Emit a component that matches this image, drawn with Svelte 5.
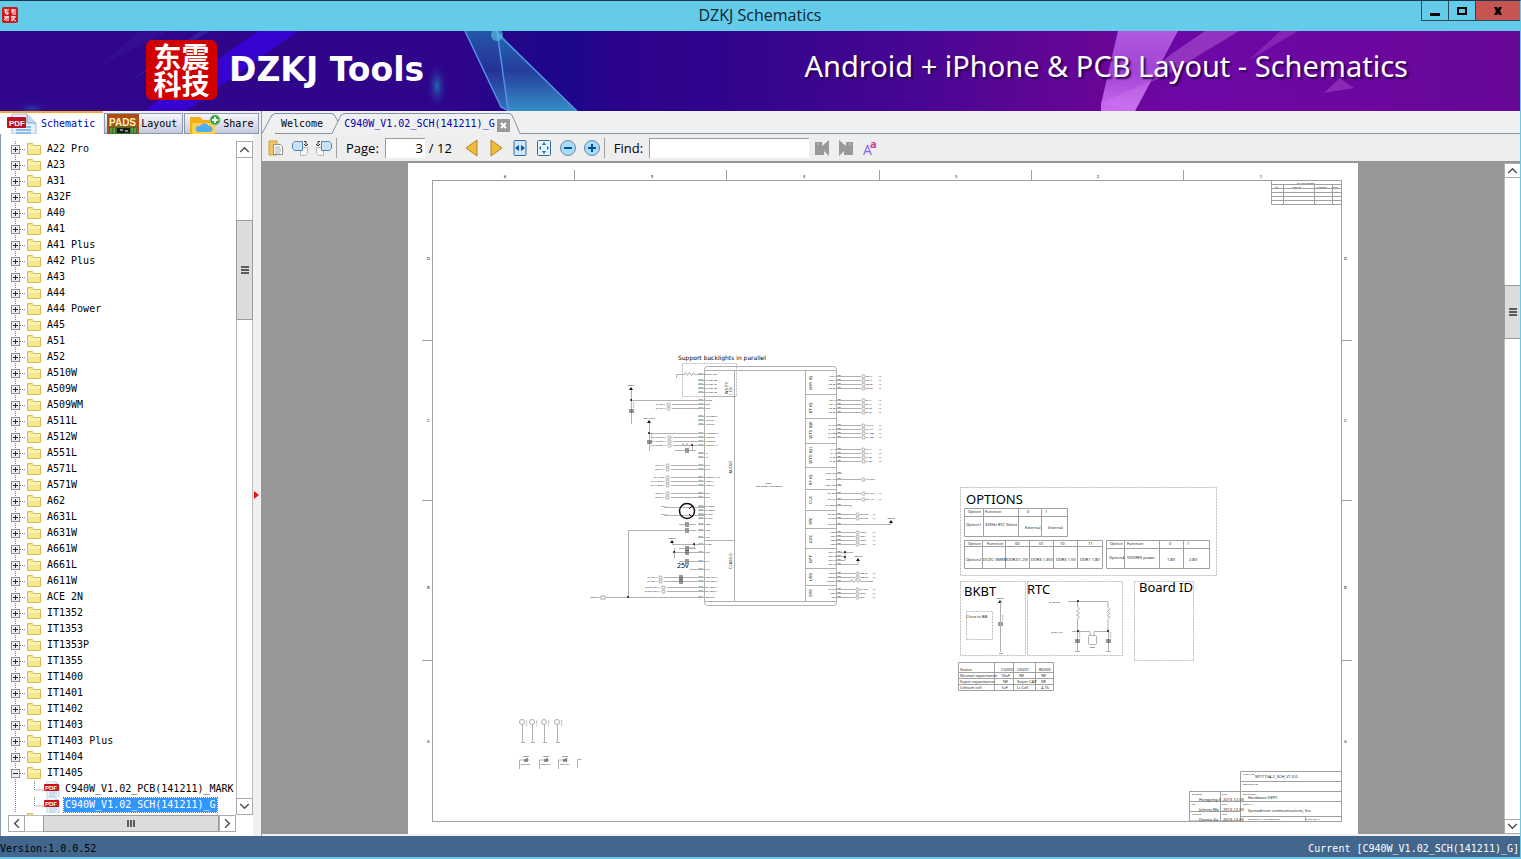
<script lang="ts">
	type PinRow = { y: number; port?: number; name?: string; note?: string; page?: string };

	const folders = [
		'A22 Pro', 'A23', 'A31', 'A32F', 'A40', 'A41', 'A41 Plus', 'A42 Plus', 'A43', 'A44',
		'A44 Power', 'A45', 'A51', 'A52', 'A510W', 'A509W', 'A509WM', 'A511L', 'A512W', 'A551L',
		'A571L', 'A571W', 'A62', 'A631L', 'A631W', 'A661W', 'A661L', 'A611W', 'ACE 2N', 'IT1352',
		'IT1353', 'IT1353P', 'IT1355', 'IT1400', 'IT1401', 'IT1402', 'IT1403', 'IT1403 Plus',
		'IT1404', 'IT1405'
	];
	const files = ['C940W_V1.02_PCB(141211)_MARK', 'C940W_V1.02_SCH(141211)_G'];

	let openFolder = $state('IT1405');
	let selectedFile = $state(files[1]);
	let page = $state('3');
	let query = $state('');

	// Sheet frame
	const columns = [[505, '6'], [652, '5'], [804, '4'], [956, '3'], [1098, '2'], [1261, '1']];
	const rows = [[260, 'D'], [422, 'C'], [589, 'B'], [743, 'A']];
	const topTicks = [574, 726, 879, 1031, 1183];
	const sideTicks = [340, 500, 660];

	// U200, left side
	const leftPins: PinRow[] = [
		{ y: 374, note: 'BACKLT_LED' },
		{ y: 380, note: 'WHTLED_IB0' }, { y: 384, note: 'WHTLED_IB1' },
		{ y: 388, note: 'WHTLED_IB2' }, { y: 392, note: 'WHTLED_IB3' },
		{ y: 400, note: 'VBATBK' },
		{ y: 404, note: 'MICP', port: 669, name: 'MIC_P' }, { y: 408, note: 'MICN', port: 669, name: 'MIC_N' },
		{ y: 416, note: 'AUXMICBIAS' }, { y: 420, note: 'AUXMICP' }, { y: 424, note: 'AUXMICN' },
		{ y: 433, note: 'HEADMICBIAS' },
		{ y: 437, note: 'HEADMICP', port: 670, name: 'HEADMIC_P' },
		{ y: 441, note: 'HEADMICN', port: 670, name: 'HEADMIC_N' },
		{ y: 445, note: 'HEADMIC_IN', port: 670, name: 'HEADSET_IN' },
		{ y: 453, note: 'AIL' }, { y: 457, note: 'AIR' },
		{ y: 465, note: 'EARP', port: 668, name: 'EAR_P' }, { y: 469, note: 'EARN', port: 668, name: 'EAR_N' },
		{ y: 477, note: 'HEADSET_L_INT', port: 668, name: 'HP_DET' },
		{ y: 481, note: 'HPOUT_L', port: 668, name: 'HPHONE_L' },
		{ y: 485, note: 'HPOUT_R', port: 668, name: 'HPHONE_R' },
		{ y: 493, note: 'SPKP', port: 668, name: 'SPK_P' }, { y: 497, note: 'SPKN', port: 668, name: 'SPK_N' },
		{ y: 506, note: 'CK_32OUT' }, { y: 510, note: 'CK_32OUT' }, { y: 514, note: 'CK_32IN' },
		{ y: 518, note: 'CK_32IN' }, { y: 524, note: 'VCOM' }, { y: 530, note: 'VREG' },
		{ y: 537, note: 'AVSS' }, { y: 544, note: 'PAVDD' }, { y: 552, note: 'PVSS' },
		{ y: 561, note: 'FLYP' }, { y: 569, note: 'FLYN' },
		{ y: 577, note: 'VIBR_VDD_IN', port: 661, name: 'VIBR_P' },
		{ y: 581, note: 'VIBR_VDD_EX', port: 661, name: 'VIBR_N' },
		{ y: 587, note: 'SPKL_OUTP_1', port: 664, name: 'SPKR_OUT_P' },
		{ y: 591, note: 'SPKL_OUTN_1', port: 664, name: 'SPKR_OUT_N' },
		{ y: 597, note: 'VDD_SPKR' }
	];

	// U200, right side
	function bank(start: number, names: string[], port: number, step = 4, prefix = ''): PinRow[] {
		return names.map((name, i) => ({ y: start + i * step, port, name, note: prefix + name, page: '[4]' }));
	}
	const rightPins: PinRow[] = [
		...bank(376, ['WB_IP', 'WB_IN', 'WB_QP', 'WB_QN'], 863, 4, 'A_'),
		...bank(400, ['BT_IP', 'BT_IN', 'BT_QP', 'BT_QN'], 863, 4, 'A_'),
		...bank(425, ['RF_TXI0', 'RF_TXI1', 'RF_TXQ0', 'RF_TXQ1'], 863),
		...bank(449, ['RX_IP', 'RX_IN', 'RX_QP', 'RX_QN'], 863, 4),
		{ y: 473, note: 'RFCTL_REF' },
		{ y: 479, note: 'RFCTL_APC', port: 863, name: 'APC_OUT' },
		{ y: 485, note: 'RFCTL_ADC' },
		...bank(493, ['CLK_26M', 'CLK_AUX'], 863, 6),
		{ y: 505, note: 'CLK_REQ_O' },
		...bank(514, ['32K_OUT', '32K_RTC'], 857, 4),
		{ y: 524, note: 'VBAT_BK' },
		...bank(532, ['ADCI0', 'ADCI1', 'ADCI2', 'ADCI3'], 857),
		{ y: 552, note: 'GPT_KA' }, { y: 556, note: 'GPT_KB' },
		{ y: 560, note: 'GPT_KC' }, { y: 564, note: 'GPT_KD' },
		...bank(573, ['USB_DP', 'USB_DM'], 857),
		{ y: 581, note: 'USB_REXT' },
		...bank(589, ['EXT_RST', 'PBINT', 'TEST'], 857)
	];
	const sections: [number, number, string][] = [
		[394, 383, 'WIFI IQ'], [418, 408, 'BT IQ'], [443, 430, 'WTX IQ0'], [467, 455, 'WTD IQ1'],
		[489, 480, 'RF IQ'], [510, 500, 'CLK'], [528, 521, 'RTC'], [548, 539, 'ADC'],
		[568, 559, 'GPT'], [585, 577, 'USB'], [601, 593, 'SYS']
	];
	const testPoints = [[522, '1'], [532, '2'], [544, '3'], [557, '4']];
	const clips = [519, 539, 558];

	const optionCells: [number, number, string][] = [
		[968, 513, 'Option'], [985, 513, 'Function'], [1027, 513, '0'], [1045, 513, '1'],
		[966, 526, 'Option1'], [985, 526, '32KHz RTC Select'], [1025, 529, 'External'], [1048, 529, 'Internal'],
		[968, 545, 'Option'], [987, 545, 'Function'], [1015, 545, '00'], [1039, 545, '01'], [1060, 545, '10'], [1088, 545, '11'],
		[966, 561, 'Option2'], [983, 561, 'DCDC VMEM'], [1007, 561, 'DDR2(1.2V)'], [1031, 561, 'DDR3 1.35V'], [1056, 561, 'DDR3 1.5V'], [1080, 561, 'DDR1 1.8V'],
		[1110, 545, 'Option'], [1127, 545, 'Function'], [1169, 545, '0'], [1187, 545, '1'],
		[1109, 559, 'Option4'], [1127, 559, 'VDDRF0 power'], [1167, 561, '1.8V'], [1189, 561, '2.8V'],
		[960, 671, 'Status'], [1001, 671, 'C0200'], [1017, 671, 'U0201'], [1039, 671, 'R0200'],
		[960, 677, 'Normal capacitance'], [1001, 677, '10uF'], [1019, 677, 'NF'], [1041, 677, 'NF'],
		[960, 683, 'Super capacitance'], [1003, 683, 'NF'], [1017, 683, 'Super CAP'], [1041, 683, '0R'],
		[960, 689, 'Lithium cell'], [1001, 689, '1uF'], [1017, 689, 'Li-Cell'], [1041, 689, '4.7k']
	];
	const titleCells: [number, number, string][] = [
		[1255, 778, 'SP7715A-2_SCH_V1.0.0'], [1248, 799, 'Hardware DEPT.'],
		[1248, 812, 'Spreadtrum communications, Inc.'],
		[1199, 801, 'Hongping.S'], [1223, 801, '2013-12-03'],
		[1199, 811, 'Johnny.Ma'], [1223, 811, '2013-12-03'],
		[1199, 821, 'Dennis.Xu'], [1223, 821, '2013-12-03']
	];
	const titleLabels: [number, number, string][] = [
		[1243, 775, 'TITLE NAME'], [1243, 785, 'DOCUMENT NO.'], [1243, 795, 'DEPARTMENT'], [1243, 805, 'COMPANY'],
		[1192, 795, 'DESIGNED'], [1222, 795, 'DATE'], [1192, 805, 'REV'], [1222, 805, 'DATE'],
		[1192, 815, 'CHECKED'], [1222, 815, 'DATE'], [1248, 820, 'CONFIDENTIAL AND PROPRIETARY'], [1306, 820, 'SHEET 3  OF  12'],
		[1297, 184, 'REVISION RECORD'], [1275, 188, 'LTR'], [1293, 188, 'ECO NO:'], [1316, 188, 'APPROVED:'], [1333, 188, 'DATE:']
	];
</script>

{#snippet chevron(dir: string)}
	<svg class="chevron {dir}" viewBox="0 0 9 9" aria-hidden="true">
		<path d="M1 6.500 4.500 3 8 6.500" fill="none" stroke="#505050" stroke-width="1.200" />
	</svg>
{/snippet}

{#snippet pdf()}
	<svg class="pdf" viewBox="0 0 16 16" aria-hidden="true">
		<path d="M3 0h8l4 4v12H3z" fill="#edf4fc" stroke="#bfd4ea" />
		<path d="M5 11h8M5 13h8M5 15h6M11 3h3" stroke="#a9cbea" />
		<rect y="3" width="15" height="7" rx="1" fill="#c41220" />
		<text x="1" y="9" class="pdf-mark">PDF</text>
	</svg>
{/snippet}

{#snippet cap(x: number, y: number)}
	<path d="M{x - 8} {y + 0.5}h6M{x + 2} {y + 0.5}h7" class="wire" />
	<path d="M{x - 1} {y - 2}v5M{x + 1} {y - 2}v5" class="heavy" />
{/snippet}

{#snippet vcap(x: number, y: number)}
	<path d="M{x - 2} {y - 1}h5M{x - 2} {y + 1}h5" class="heavy" />
	<text x={x + 3} y={y - 3} class="micro" transform="rotate(-90 {x + 3} {y - 3})">C0210</text>
{/snippet}

{#snippet rail(x: number, y: number, name: string)}
	<text {x} y={y - 2} class="micro" text-anchor="middle">{name}</text>
	<path d="M{x - 2} {y + 2}h4l-2-3z" fill="#111" />
{/snippet}

<div class="window">
	<header class="titlebar">
		<svg class="app-icon" viewBox="0 0 16 16" aria-hidden="true">
			<rect width="16" height="16" rx="2" fill="#d0181c" />
			<path d="M2 3h5M3 6h4M4 2 3 6M5 4v4M9 3h5M11 2v3M9 5h5M10 7h4M2 10h5M4 9v5M2 13l3-3M6 9v5M9 10h5M10 9v5M12 9v2l-2 3M11 12l3 2" fill="none" stroke="#fff" />
		</svg>
		<h1>DZKJ Schematics</h1>
		<div class="window-buttons">
			<button aria-label="Minimize"><svg viewBox="0 0 12 10"><path d="M1 7h10v3H1z" /></svg></button>
			<button aria-label="Maximize"><svg viewBox="0 0 12 10"><path d="M1 1h10v8H1zM3 3v4h6V3z" fill-rule="evenodd" /></svg></button>
			<button class="close" aria-label="Close"><svg viewBox="0 0 12 10"><path d="M2 1h3l1 2 1-2h3L8 5l2 4H7L6 7 5 9H2l2-4z" /></svg></button>
		</div>
	</header>

	<section class="banner">
		<svg class="backdrop" viewBox="0 0 1520 80" preserveAspectRatio="none" aria-hidden="true">
			<defs>
				<linearGradient id="night">
					<stop offset="0" stop-color="#30068a" />
					<stop offset="0.300" stop-color="#2e048a" />
					<stop offset="0.370" stop-color="#1c0788" />
					<stop offset="0.410" stop-color="#2b038a" />
					<stop offset="0.480" stop-color="#31048c" />
					<stop offset="0.600" stop-color="#470693" />
					<stop offset="0.720" stop-color="#680597" />
					<stop offset="0.780" stop-color="#6e08a5" />
					<stop offset="1" stop-color="#680698" />
				</linearGradient>
				<linearGradient id="crystal" x1="0" y1="0" x2="0" y2="1">
					<stop offset="0" stop-color="#246bb0" />
					<stop offset="0.500" stop-color="#253c9c" />
					<stop offset="1" stop-color="#368fc7" />
				</linearGradient>
				<linearGradient id="orchid" x1="0" y1="0" x2="0" y2="1">
					<stop offset="0" stop-color="#b05ae0" />
					<stop offset="0.500" stop-color="#a243d4" />
					<stop offset="1" stop-color="#c96cf0" />
				</linearGradient>
				<radialGradient id="glow">
					<stop offset="0" stop-color="#1f6db4" />
					<stop offset="1" stop-color="#2e048a" stop-opacity="0" />
				</radialGradient>
			</defs>
			<rect width="1520" height="80" fill="url(#night)" />
			<path d="M258 0h40L186 80h-42z" fill="#3804dc" opacity="0.850" />
			<path d="M200 0h10L126 53z" fill="#3b28a5" opacity="0.600" />
			<path d="M140 0h30L100 34z" fill="#3b28a5" opacity="0.250" />
			<ellipse cx="437" cy="55" rx="11" ry="24" fill="url(#glow)" />
			<ellipse cx="32" cy="78" rx="18" ry="10" fill="url(#glow)" opacity="0.500" />
			<path d="M465 0h32l11 78-7-2z" fill="url(#crystal)" opacity="0.800" />
			<path d="M497 0l80 80h-69z" fill="url(#crystal)" />
			<path d="M465 0l36 76 8 4M497 0l11 78M497 2l80 78" fill="none" stroke="#5493e6" stroke-width="1.500" />
			<circle cx="497" cy="4" r="6" fill="#5ecbe3" opacity="0.600" />
			<path d="M1118 0h60l-43 80h-34v-7z" fill="url(#orchid)" />
			<path d="M1178 0l-28 50-49 22 34 8z" fill="#d987f2" opacity="0.250" />
			<path d="M1205 0h34l-76 46-30 12 37-34z" fill="#b25ad8" opacity="0.550" />
			<path d="M1280 0h18l-50 30z" fill="#b25ad8" opacity="0.350" />
			<path d="M1340 47l14 10-30 5z" fill="#a23fc4" opacity="0.600" />
		</svg>
		<div class="banner-text">
			<div class="seal"><span>东震科技</span></div>
			<strong>DZKJ Tools</strong>
			<p>Android + iPhone &amp; PCB Layout - Schematics</p>
		</div>
	</section>

	<div class="workspace">
		<aside class="sidebar">
			<nav class="side-tabs">
				<button class="active">
					<svg width="30" height="21" viewBox="0 0 30 21" aria-hidden="true">
						<path d="M5 1h15l9 9v11H5z" fill="#e6f0fb" stroke="#a8c0dc" />
						<path d="M20 1v9h9" fill="#c2d9f1" stroke="#88a5c7" />
						<path d="M9 14h15M9 17h15M9 20h15" stroke="#8bbbe8" stroke-width="2" />
						<rect y="4" width="19" height="11" rx="1" fill="#bd111d" />
						<text x="2" y="13" class="tab-pdf">PDF</text>
					</svg>
					Schematic
				</button>
				<button>
					<svg width="32" height="20" viewBox="0 0 32 20" aria-hidden="true">
						<rect width="32" height="20" fill="#a94d19" />
						<path d="M2 13h28v7H2z" fill="#397227" />
						<path d="M10 14h13v5H10z" fill="#171c17" />
						<path d="M4 14v5M7 14v5M25 14v5M28 14v5" stroke="#82bd65" />
						<path d="M13 16h3M18 17h3" stroke="#fff" />
						<text x="2" y="12" class="pads">PADS</text>
					</svg>
					Layout
				</button>
				<button class="share">
					<svg width="32" height="20" viewBox="0 0 32 20" aria-hidden="true">
						<path d="M1 3h10l3 3h12v14H1z" fill="#f5ae19" />
						<path d="M3 9h23v11H3z" fill="#ffd04a" />
						<path d="M9 18a3 3 0 0 1 2-6 5 5 0 0 1 9 0 3 3 0 0 1 1 6z" fill="#50aef0" />
						<circle cx="26" cy="6" r="5" fill="#32a443" stroke="#83cc83" />
						<path d="M26 3v6M23 6h6" stroke="#fff" stroke-width="2" />
					</svg>
					Share
				</button>
			</nav>

			<div class="tree-grid">
				<div class="tree">
					<ul>
						{#each folders as folder}
							<li>
								<button class="node" onclick={() => (openFolder = openFolder === folder ? '' : folder)}>
									<svg width="36" height="16" viewBox="0 0 36 16" aria-hidden="true">
										<path d="M7.500 0v16" class="dots" />
										<path d="M12 8.500h6" class="dots" />
										<rect x="3.500" y="4.500" width="8" height="8" fill="#ededed" stroke="#8d8d8d" />
										<path d={folder === openFolder ? 'M5 8.500h5' : 'M5 8.500h5M7.500 6v5'} stroke="#222b3e" />
										<path d="M19.500 2.500h5l1 2h7v9h-13z" fill="#f6e78a" stroke="#d8bd55" />
										<path d="M20 5h12v3H20z" fill="#fff8c2" opacity="0.700" />
									</svg>
									<span>{folder}</span>
								</button>
								{#if folder === openFolder}
									<ul>
										{#each files as file}
											<li>
												<button class="node file" class:selected={file === selectedFile} onclick={() => (selectedFile = file)}>
													<svg width="36" height="16" viewBox="0 0 36 16" aria-hidden="true">
														<path d="M7.500 0v16M26.500 0v9h10" class="dots" />
													</svg>
													{@render pdf()}
													<span>{file}</span>
												</button>
											</li>
										{/each}
									</ul>
								{/if}
							</li>
						{/each}
						<li><button class="node" aria-label="Next folder"><svg width="36" height="16" viewBox="0 0 36 16"><path d="M19.500 .500h5l1 2h7v9h-13z" fill="#f6e78a" stroke="#d8bd55" /></svg></button></li>
					</ul>
				</div>
				<div class="scroll vertical">
					<button aria-label="Scroll up">{@render chevron('up')}</button>
					<div class="track before"></div>
					<div class="thumb"><i></i><i></i><i></i></div>
					<div class="track after"></div>
					<button aria-label="Scroll down">{@render chevron('down')}</button>
				</div>
				<div class="scroll horizontal">
					<button aria-label="Scroll left">{@render chevron('left')}</button>
					<div class="track before"></div>
					<div class="thumb"><i></i><i></i><i></i></div>
					<button aria-label="Scroll right">{@render chevron('right')}</button>
				</div>
			</div>
		</aside>
		<div class="splitter">
			<svg width="5" height="8" viewBox="0 0 5 8" aria-hidden="true"><path d="M0 0l5 4-5 4z" fill="#e8140c" /></svg>
		</div>

		<main>
			<nav class="doc-tabs">
				<svg width="13" height="21" viewBox="0 0 13 21" aria-hidden="true"><path d="M0 20.500 10 2l3-1.500" class="edge" /></svg>
				<button>Welcome</button>
				<svg width="12" height="21" viewBox="0 0 12 21" aria-hidden="true"><path d="M0 .500l2 1 4 7M0 20.500 9 2l3-1.500" class="edge" /></svg>
				<button class="current">C940W_V1.02_SCH(141211)_G</button>
				<button class="current tab-close" aria-label="Close tab">
					<svg width="13" height="13" viewBox="0 0 13 13"><rect width="13" height="13" fill="#999" /><path d="M4 4l5 5M9 4 4 9" stroke="#fff" stroke-width="2" /></svg>
				</button>
				<svg width="11" height="21" viewBox="0 0 11 21" aria-hidden="true"><path d="M0 .500 2 2l8 18.500h1" class="edge" /></svg>
				<div class="tab-rest"></div>
			</nav>

			<div class="toolbar">
				<button aria-label="Copy">
					<svg width="16" height="16" viewBox="0 0 16 16"><path d="M1 1h8v14H1z" fill="#f2c564" stroke="#d29c3e" /><path d="M5.500 4.500h7l2 2v8h-9z" fill="#fff" stroke="#8a8d92" /><path d="M7 7h5M7 9h6M7 11h6M7 13h5" stroke="#a1adb9" /></svg>
				</button>
				<button aria-label="Rotate right">
					<svg width="16" height="16" viewBox="0 0 16 16"><path d="M8.500 7.500h7v6l-2 2h-5z" fill="#f4f5f7" stroke="#b4b9bf" /><path d="M2.500 1.500h8v9h-8l-2-2v-5z" fill="#c9e1f5" stroke="#5688b4" /><path d="M12 1.500h2v3M12 4l2 2 2-2" fill="none" stroke="#333" /></svg>
				</button>
				<button aria-label="Rotate left">
					<svg width="16" height="16" viewBox="0 0 16 16"><path d="M.500 7.500h7v8h-5l-2-2z" fill="#f4f5f7" stroke="#b4b9bf" /><path d="M5.500 1.500h8l2 2v5l-2 2h-8z" fill="#c9e1f5" stroke="#5688b4" /><path d="M4 1.500H2v3M0 4l2 2 2-2" fill="none" stroke="#333" /></svg>
				</button>
				<span class="divider"></span>
				<label for="page">Page:</label>
				<input id="page" bind:value={page} />
				<span class="total">/ 12</span>
				<button aria-label="Previous page">
					<svg width="16" height="16" viewBox="0 0 16 16"><path d="M13 0v16L2 8z" fill="#f0bd3b" stroke="#b58326" /></svg>
				</button>
				<button aria-label="Next page">
					<svg width="16" height="16" viewBox="0 0 16 16"><path d="M3 0v16l11-8z" fill="#f0bd3b" stroke="#b58326" /></svg>
				</button>
				<button aria-label="Fit width">
					<svg width="16" height="16" viewBox="0 0 16 16"><rect x="2" y=".500" width="12" height="15" rx="1" fill="#cee6fa" stroke="#366c9f" /><path d="M7 5v6L3 8zM9 5v6l4-3z" fill="#0b579c" /></svg>
				</button>
				<button aria-label="Fit page">
					<svg width="16" height="16" viewBox="0 0 16 16"><rect x="1.500" y=".500" width="13" height="15" rx="1" fill="#e5f2fc" stroke="#366c9f" /><path d="M8 2l2 3H6zM8 14l2-3H6zM3 8l2-2v4zM13 8l-2-2v4z" fill="#236cad" /></svg>
				</button>
				<button aria-label="Zoom out">
					<svg width="16" height="16" viewBox="0 0 16 16"><circle cx="8" cy="8" r="7.500" fill="#a9dcfa" stroke="#6387a7" /><path d="M4 8h8" stroke="#075193" stroke-width="2" /></svg>
				</button>
				<button aria-label="Zoom in">
					<svg width="16" height="16" viewBox="0 0 16 16"><circle cx="8" cy="8" r="7.500" fill="#a9dcfa" stroke="#6387a7" /><path d="M4 8h8M8 4v8" stroke="#075193" stroke-width="2" /></svg>
				</button>
				<span class="divider"></span>
				<label for="find">Find:</label>
				<input id="find" bind:value={query} />
				<button aria-label="Find previous">
					<svg width="16" height="16" viewBox="0 0 16 16"><path d="M1 2h7v4l7-6v16l-5-5v4H1z" fill="#999" /><path d="M3 4h2" stroke="#ccc" /></svg>
				</button>
				<button aria-label="Find next">
					<svg width="16" height="16" viewBox="0 0 16 16"><path d="M15 2H8v4L1 0v16l5-5v4h9z" fill="#999" /><path d="M11 4h2" stroke="#ccc" /></svg>
				</button>
				<button aria-label="Match case">
					<svg width="22" height="24" viewBox="0 0 22 24"><text x="4" y="19" class="big-a">A</text><text x="11" y="12" class="small-a">a</text></svg>
				</button>
			</div>

			<div class="viewer">
				<div class="canvas">
					<svg class="sheet" width="950" height="671" viewBox="408 163 950 671" role="img" aria-label="Schematic sheet">
						<g class="frame">
							<rect x="432.500" y="180.500" width="909" height="641" />
							{#each topTicks as x}<path d="M{x}.500 170v10" />{/each}
							{#each sideTicks as y}<path d="M422 {y}.500h10M1342 {y}.500h10" />{/each}
							<path d="M1271.500 180.500h70v24h-70zM1271 184.500h71M1271 188.500h71M1271 192.500h71M1271 196.500h71M1271 200.500h71M1283.500 184v20M1314.500 184v20M1332.500 184v20" />
							<path d="M1240.500 771.500h101v50h-101zM1240 781.500h102M1189 791.500h153M1240 801.500h102M1240 816.500h102M1305.500 816v5M1189.500 791v30h51M1220.500 791v30M1189 801.500h51M1189 811.500h51" />
						</g>
						{#each columns as [x, label]}<text {x} y="178" class="zone" text-anchor="middle">{label}</text>{/each}
						{#each rows as [y, label]}
							<text x="427" {y} class="zone">{label}</text>
							<text x="1344" {y} class="zone">{label}</text>
						{/each}
						{#each titleCells as [x, y, label]}<text {x} {y} class="tiny">{label}</text>{/each}
						{#each titleLabels as [x, y, label]}<text {x} {y} class="micro">{label}</text>{/each}

						<!-- U200 -->
						<text x="678" y="360" class="note">Support backlights in parallel</text>
						<path d="M682.500 363.500h54v33h-54z" class="dash" />
						<g class="wire">
							<rect x="704.500" y="366.500" width="132" height="239" rx="3" />
							<path d="M704 370.500h132M704 601.500h132M734.500 370v231M805.500 370v231M704 396.500h30M704 540.500h30" />
						</g>
						{#each sections as [y, mid, label]}
							<path d="M805 {y}.500h31" class="wire" />
							<text x="812" y={mid} class="zone" text-anchor="middle" transform="rotate(-90 812 {mid})">{label}</text>
						{/each}
						<text x="728" y="388" class="tiny" text-anchor="middle" transform="rotate(-90 728 388)">WHITE</text>
						<text x="732" y="391" class="tiny" text-anchor="middle" transform="rotate(-90 732 391)">LED</text>
						<text x="732" y="467" class="tiny" text-anchor="middle" transform="rotate(-90 732 467)">AUDIO</text>
						<text x="732" y="561" class="tiny" text-anchor="middle" transform="rotate(-90 732 561)">CLASS-G</text>
						<text x="769" y="484" class="micro" text-anchor="middle">U200-A</text>
						<text x="769" y="487" class="micro" text-anchor="middle">SC2713S-BGA-SPREADTRUM</text>

						{#each leftPins as pin}
							<path d="M{pin.port ? pin.port + 3 : 698} {pin.y}.500H704" class="wire" />
							<text x="699" y={pin.y} class="micro">B12</text>
							<text x="705" y={pin.y + 1} class="micro">{pin.note}</text>
							{#if pin.port}
								<rect x={pin.port - 2} y={pin.y - 1} width="3" height="3" rx="1" class="port" />
								<text x={pin.port - 4} y={pin.y + 1} class="micro" text-anchor="end">[5] {pin.name}</text>
							{/if}
						{/each}
						{#each rightPins as pin}
							<path d="M836 {pin.y}.500H{pin.port ? pin.port - 2 : 842}" class="wire" />
							<text x="837" y={pin.y} class="micro">AB2</text>
							<text x="836" y={pin.y + 1} class="micro" text-anchor="end">{pin.note}</text>
							{#if pin.port}
								<rect x={pin.port - 1} y={pin.y - 1} width="3" height="3" rx="1" class="port" />
								<text x={pin.port + 3} y={pin.y + 1} class="micro">{pin.name}</text>
								<text x={pin.port + 17} y={pin.y + 1} class="micro" text-anchor="middle">{pin.page}</text>
							{/if}
						{/each}

						<!-- nets around U200 -->
						<g class="wire">
							<path d="M676.500 378v-3.500h8l1-2 2 3 2-3 2 3 2-3 1 2h9" />
							<path d="M631.500 390v34M631 400.500h73M649.500 423v28M649 433.500h55" />
							<path d="M675 445.500h7l1-2 2 3 2-3 2 3 1-1h14M692.500 445v5M675 450.500h6" />
							<path d="M628.500 597.500v-67h52M606 597.500h98" />
							<path d="M672 544.500h32M672.500 544v-3M694.500 544v4h-7M674.500 548v10M674 552.500h30M690 561.500h14M690 569.500h14M664 507.500h40M664 515.500h40" />
							<path d="M842 524.500h49v-3M842 552.500h11M842 556.500h3v-4M842 560.500h3v-4M842 564.500h16v-4M842 505.500h9v2" />
							<path d="M842 581.500h9l1-2 2 3 2-3 2 3 2-3 1 2h12M836 479.500h25" />
						</g>
						{@render rail(631, 388, 'VDDBAT')}
						{@render rail(649, 421, 'VDD_AUDIO')}
						{@render rail(672, 541, 'VDDSIM')}
						{@render rail(891, 521, 'VDDRTC')}
						{@render rail(858, 559, 'VDDUSB')}
						{@render vcap(631, 411)}
						{@render vcap(649, 442)}
						{@render cap(687, 450)}
						{@render cap(687, 524)}
						{@render cap(687, 530)}
						{@render cap(687, 548)}
						{@render cap(687, 552)}
						{@render cap(687, 561)}
						{@render cap(681, 577)}
						{@render cap(681, 581)}
						<g fill="#111">
							<circle cx="631" cy="400" r="1" /><circle cx="649" cy="433" r="1" /><circle cx="692" cy="445" r="1" />
							<circle cx="628" cy="597" r="1" /><circle cx="694" cy="544" r="1" /><circle cx="674" cy="552" r="1" />
							<circle cx="845" cy="552" r="1" /><circle cx="845" cy="557" r="1" />
						</g>
						<circle cx="687" cy="511" r="7.500" class="probe" />
						<path d="M689 509l3-3M689 514l3 3" stroke="#111" />
						<text x="661" y="507" class="micro">SPK_L</text>
						<text x="661" y="515" class="micro">SPK_R</text>
						<text x="677" y="568" class="value">25v</text>
						<text x="590" y="598" class="micro">VDD_SPKR</text>
						<rect x="601" y="596" width="4" height="3" class="port" />

						<!-- options -->
						<path d="M960.500 487.500h256v88h-256zM960.500 581.500h65v74h-65zM1027.500 581.500h95v74h-95zM1134.500 581.500h59v79h-59zM966.500 611.500h26v28h-26z" class="dash" />
						<text x="966" y="504" class="heading">OPTIONS</text>
						<text x="964" y="596" class="heading">BKBT</text>
						<text x="1027" y="594" class="heading">RTC</text>
						<text x="1139" y="592" class="heading">Board ID</text>
						<text x="966" y="618" class="tiny">Close to BB</text>
						<g class="frame">
							<path d="M964.500 508.500h103v28h-103zM964 516.500h103M983.500 508v28M1018.500 508v28M1041.500 508v28" />
							<path d="M964.500 540.500h138v28h-138zM964 546.500h138M982.500 540v28M1005.500 540v28M1029.500 540v28M1053.500 540v28M1077.500 540v28" />
							<path d="M1106.500 540.500h103v28h-103zM1106 548.500h103M1124.500 540v28M1159.500 540v28M1183.500 540v28" />
							<path d="M958.500 662.500h95v28h-95zM958 672.500h95M958 678.500h95M958 684.500h95M994.500 662v28M1013.500 662v28M1035.500 662v28" />
						</g>
						{#each optionCells as [x, y, label]}<text {x} {y} class="tiny">{label}</text>{/each}

						{@render rail(1000, 601, 'VDDRTC')}
						{@render vcap(1000, 624)}
						<g class="wire">
							<path d="M1000.500 602v50M999 653.500h4" />
							<path d="M1068 601.500h40v6l2 2-3 2 3 2-3 2 3 2-2 2v12h-14v4M1077.500 601v6l2 2-3 2 3 2-3 2 3 2-2 2v32M1108.500 631v20M1072 631.500h18v4" />
							<rect x="1088.500" y="635.500" width="8" height="9" rx="1" />
							<path d="M1075 651.500h5M1106 651.500h5" />
						</g>
						{@render vcap(1077, 641)}
						{@render vcap(1108, 641)}
						<g fill="#111"><circle cx="1078" cy="601" r="1" /><circle cx="1078" cy="631" r="1" /><circle cx="1108" cy="631" r="1" /></g>
						<text x="1049" y="603" class="micro">[5]  VBAT_BK</text>
						<text x="1051" y="633" class="micro">[5]  32K_XTAL</text>
						<text x="1089" y="648" class="micro">Y0200</text>

						<!-- test points -->
						{#each testPoints as [x, n]}
							<circle cx={x} cy="722" r="2.500" class="port" />
							<path d="M{x}.500 725v17M{Number(x) - 1} 742.500h4" class="wire" />
							<text x={Number(x) + 5} y="726" class="micro" transform="rotate(-90 {Number(x) + 5} 726)">TP20{n}</text>
						{/each}
						{#each clips as x}
							<path d="M{x}.500 769v-9h10" class="wire" />
							<path d="M{x + 6} 759v3M{x + 8} 758v4" class="heavy" />
							<text x={x + 4} y="757" class="micro">C0220</text>
							<text x={x + 2} y="765" class="micro">GND_RTC</text>
						{/each}
						<path d="M577.500 768v-8.500h4" class="wire" />
					</svg>
				</div>
				<div class="scroll vertical">
					<button aria-label="Page up">{@render chevron('up')}</button>
					<div class="track before"></div>
					<div class="thumb"><i></i><i></i><i></i></div>
					<div class="track after"></div>
					<button aria-label="Page down">{@render chevron('down')}</button>
				</div>
			</div>
		</main>
	</div>

	<footer>
		<span>Version:1.0.0.52</span>
		<span class="current-file">Current [{selectedFile}]</span>
	</footer>
</div>

<style>
	:global(body) {
		margin: 0;
	}

	.window {
		--mono: 'DejaVu Sans Mono', 'Liberation Mono', monospace;
		--ui: 'Open Sans', 'Noto Sans', sans-serif;
		box-sizing: border-box;
		display: flex;
		flex-direction: column;
		height: 100vh;
		border-top: 1px solid #183a55;
		border-right: 1px solid #64cbe9;
		border-bottom: 2px solid #64cbe9;
		background: #f0f0f0;
		color: #000;
		font: 10px/16px var(--mono);
		overflow: hidden;
	}

	button {
		margin: 0;
		padding: 0;
		border: 0;
		background: none;
		color: inherit;
		font: inherit;
		white-space: nowrap;
	}

	svg {
		display: block;
		flex: none;
	}

	.titlebar {
		display: grid;
		grid-template-columns: 1fr auto 1fr;
		height: 30px;
		flex: none;
		background: #64cbe9;
	}

	.app-icon {
		width: 16px;
		height: 16px;
		margin: 6px 2px;
	}

	h1 {
		margin: 0;
		color: #0c2532;
		font: 16px/28px var(--ui);
	}

	.window-buttons {
		display: flex;
		justify-content: flex-end;
		height: 20px;
	}

	.window-buttons button {
		display: grid;
		place-items: center;
		width: 27px;
		border: solid #28495a;
		border-width: 0 0 1px 1px;
	}

	.window-buttons .close {
		width: 45px;
		background: #c75450;
	}

	.window-buttons svg {
		width: 12px;
		height: 10px;
	}

	.banner {
		display: grid;
		height: 80px;
		flex: none;
	}

	.backdrop,
	.banner-text {
		grid-area: 1 / 1;
		width: 100%;
		height: 80px;
	}

	.banner-text {
		z-index: 1;
		box-sizing: border-box;
		display: flex;
		align-items: center;
		padding: 0 112px 3px 146px;
		color: #fff;
		font-family: var(--ui);
	}

	.seal {
		display: grid;
		place-content: center;
		width: 71px;
		height: 60px;
		border-radius: 6px;
		background: #d00000;
		font: 700 28px/27px 'Noto Sans CJK SC', sans-serif;
	}

	.seal span {
		width: 56px;
		word-break: break-all;
	}

	.banner strong {
		margin-left: 12px;
		font: 700 33px/40px 'DejaVu Sans', sans-serif;
	}

	.banner p {
		margin: 0 0 0 auto;
		padding-bottom: 7px;
		font: 29px/40px 'Noto Sans', sans-serif;
		text-shadow: 2px 2px 2px #2a0050;
	}

	.workspace {
		display: flex;
		flex: 1;
		min-height: 0;
	}

	.sidebar {
		display: flex;
		flex-direction: column;
		width: 253px;
		flex: none;
	}

	.side-tabs {
		display: flex;
		gap: 1px;
		width: 260px;
		height: 23px;
		flex: none;
	}

	.side-tabs button {
		box-sizing: border-box;
		display: flex;
		align-items: center;
		gap: 2px;
		height: 21px;
		margin-top: 2px;
		padding: 0 5px 0 2px;
		border: 1px solid #8b98b0;
		background: linear-gradient(#f6f7fa, #c5cadd);
	}

	.side-tabs .active {
		height: 23px;
		margin-top: 0;
		padding: 0 8px 0 7px;
		gap: 4px;
		border-width: 2px 0 0;
		border-color: #f2a33a;
		background: #fff;
		color: #0000b4;
	}

	.side-tabs .share {
		padding-left: 4px;
	}

	.tab-pdf {
		font: 700 8px 'Liberation Sans', sans-serif;
		fill: #fff;
	}

	.pads {
		font: 700 10px 'Liberation Sans', sans-serif;
		fill: #fff4b0;
	}

	.tree-grid {
		display: grid;
		grid-template: minmax(0, 1fr) 17px / minmax(0, 1fr) 17px;
		flex: 1;
		min-height: 0;
		padding: 7px 0 4px 7px;
		border-left: 1px solid #8a9aab;
		background: #fff;
	}

	.tree {
		overflow: hidden;
	}

	ul {
		margin: 0;
		padding: 0;
		list-style: none;
	}

	.node {
		display: flex;
		align-items: center;
		height: 16px;
		text-align: left;
	}

	.node span {
		margin-left: 2px;
		padding: 0 1px;
	}

	.node.file span {
		margin-left: 4px;
	}

	.selected span {
		height: 14px;
		line-height: 14px;
		outline: 1px dotted #b06a20;
		background: #3296fa;
		color: #fff;
	}

	.dots {
		fill: none;
		stroke: #808080;
		stroke-dasharray: 1 1;
	}

	.pdf {
		width: 16px;
		height: 16px;
	}

	.pdf-mark {
		font: 700 6px 'Liberation Sans', sans-serif;
		fill: #fff;
	}

	.scroll {
		display: flex;
		background: #fff;
	}

	.scroll button,
	.thumb {
		box-sizing: border-box;
		display: flex;
		align-items: center;
		justify-content: center;
		flex: none;
		border: 1px solid #ababab;
	}

	.scroll button {
		width: 17px;
		height: 17px;
		background: #fff;
	}

	.thumb {
		gap: 1px;
		border-color: #9c9c9c;
		background: #dcdcdc;
	}

	.thumb i {
		width: 2px;
		height: 7px;
		background: #5a5a5a;
	}

	.vertical {
		flex-direction: column;
	}

	.vertical .track {
		flex: 1;
		border: solid #bcbcbc;
		border-width: 0 1px;
	}

	.vertical .thumb {
		flex-direction: column;
	}

	.vertical .thumb i {
		width: 8px;
		height: 2px;
	}

	.sidebar .vertical .before {
		flex-grow: 62;
	}

	.sidebar .vertical .thumb {
		height: 100px;
	}

	.sidebar .vertical .after {
		flex-grow: 479;
	}

	.horizontal .before {
		width: 18px;
		border: solid #bcbcbc;
		border-width: 1px 0;
	}

	.horizontal .thumb {
		flex: 1;
	}

	.chevron {
		width: 11px;
		height: 11px;
	}

	.down {
		rotate: 180deg;
	}

	.left {
		rotate: -90deg;
	}

	.right {
		rotate: 90deg;
	}

	.splitter {
		display: flex;
		align-items: center;
		width: 8px;
		flex: none;
		padding-top: 42px;
		border-right: 1px solid #929ba3;
	}

	.splitter svg {
		margin-left: 1px;
	}

	main {
		display: flex;
		flex: 1;
		flex-direction: column;
		min-width: 0;
	}

	.doc-tabs {
		display: flex;
		align-items: flex-end;
		height: 23px;
		flex: none;
	}

	.doc-tabs button {
		box-sizing: border-box;
		height: 21px;
		padding: 0 9px 0 6px;
		border-top: 1px solid #8493a4;
		border-bottom: 1px solid #8493a4;
	}

	.doc-tabs button.current {
		padding: 0 2px 0 0;
		border-bottom-color: #f0f0f0;
		color: #0000b4;
	}

	.doc-tabs button.tab-close {
		padding: 3px 0 0;
	}

	.edge {
		fill: none;
		stroke: #8493a4;
	}

	.tab-rest {
		flex: 1;
		border-bottom: 1px solid #8493a4;
	}

	.toolbar {
		box-sizing: border-box;
		display: flex;
		align-items: center;
		height: 29px;
		flex: none;
		padding-left: 2px;
		border-bottom: 2px solid #979797;
		background: #eee;
		font: 13px/20px var(--ui);
	}

	.toolbar button {
		display: grid;
		place-items: center;
		width: 24px;
		height: 24px;
	}

	.toolbar label {
		margin: 0 6px 0 9px;
	}

	.divider {
		width: 1px;
		height: 20px;
		background: #a0a0a0;
	}

	.toolbar input {
		box-sizing: border-box;
		height: 20px;
		padding: 0 2px;
		border: solid #9c9c9c;
		border-width: 1px 0 0 1px;
		border-radius: 0;
		background: #fff;
		font: inherit;
	}

	#page {
		width: 40px;
		text-align: right;
	}

	#find {
		width: 160px;
		margin-right: 1px;
	}

	.total {
		margin: 0 8px 0 4px;
	}

	.big-a {
		font: 14px var(--ui);
		fill: #7d68e8;
	}

	.small-a {
		font: 700 11px var(--ui);
		fill: #c5399e;
	}

	.viewer {
		display: flex;
		flex: 1;
		min-height: 0;
		margin-bottom: 2px;
	}

	.canvas {
		display: flex;
		flex: 1;
		justify-content: center;
		min-width: 0;
		overflow: hidden;
		background: #979797;
	}

	.sheet {
		background: #fff;
		font-family: 'Noto Sans', sans-serif;
	}

	.viewer .scroll {
		width: 16px;
	}

	.viewer .scroll button,
	.viewer .thumb {
		width: 16px;
		height: 15px;
		border-right: 0;
	}

	.viewer .track {
		border-right: 0;
	}

	.viewer .before {
		flex-grow: 107;
	}

	.viewer .scroll .thumb {
		height: 54px;
	}

	.viewer .after {
		flex-grow: 482;
	}

	.frame {
		fill: none;
		stroke: #a0a0a0;
	}

	.wire {
		fill: none;
		stroke: #b0b0b0;
	}

	.heavy {
		fill: none;
		stroke: #333;
	}

	.port {
		fill: #fff;
		stroke: #aaa;
	}

	.dash {
		fill: none;
		stroke: #bbb;
		stroke-dasharray: 2 1;
	}

	.probe {
		fill: none;
		stroke: #111;
		stroke-width: 1.5;
	}

	.micro {
		font-size: 2px;
		fill: #111;
	}

	.tiny {
		font-size: 4px;
		fill: #222;
	}

	.zone {
		font: 4px 'DejaVu Sans', sans-serif;
		fill: #111;
	}

	.note {
		font: 6px 'DejaVu Sans', sans-serif;
	}

	.value {
		font-size: 7px;
	}

	.heading {
		font-size: 13px;
	}

	footer {
		display: flex;
		align-items: flex-end;
		justify-content: space-between;
		height: 21px;
		flex: none;
		background: #42668c;
	}

	.current-file {
		padding-right: 1px;
		color: #fff;
	}
</style>
